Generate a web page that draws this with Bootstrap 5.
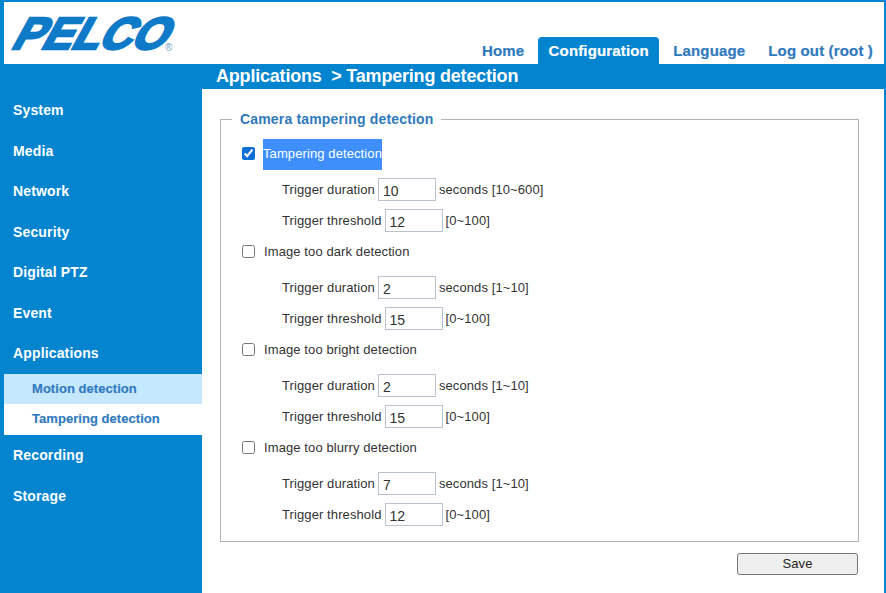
<!DOCTYPE html>
<html lang="en"><head><meta charset="utf-8"><title>Pelco</title>
<link rel="stylesheet" href="https://cdn.jsdelivr.net/npm/bootstrap@5.3.0/dist/css/bootstrap.min.css">
<style>
html,body{height:100%;overflow:hidden}
body{background:#0284cf;font-family:"Liberation Sans",Arial,sans-serif;font-size:13px;color:#333;padding:2px 2px 0 4px}
.shell{height:591px;display:flex;flex-direction:column}
.topband{height:62px;background:#fff;display:flex;justify-content:space-between;align-items:flex-end}
.pelco{margin:13px 0 0 6px;align-self:flex-start;overflow:visible}
.tabs .nav-link{color:#2f79bd;font-weight:700;font-size:15px;letter-spacing:.15px;padding:0 11px 0 12px;height:27px;line-height:28px;border-radius:4px 4px 0 0;-webkit-text-stroke:.2px;white-space:nowrap}
.tabs .nav-link.current{background:#0284cf;color:#fff;width:121px;text-align:center;padding:0}
.tabs .tab-home{padding-right:14px}
.tabs .tab-lang{padding-left:14px;padding-right:11px}
.belly{flex:1;display:flex;min-height:0}
.sidebar{width:198px;flex:none;padding-top:25px}
.sideitem{display:block;height:40.5px;line-height:42px;color:#fff;font-weight:700;font-size:14px;letter-spacing:.15px;padding-left:9px;text-decoration:none}
.sideitem.opened{height:42px}
.sideitem.aftersub{margin-top:-1px}
.subitem{display:block;height:31px;line-height:29px;color:#2f79bd;font-weight:700;font-size:13px;letter-spacing:.05px;padding-left:28px;background:#fff;text-decoration:none;-webkit-text-stroke:.15px}
.subitem.hovered{background:#c5e8ff;height:30px}
.mainpane{flex:1;display:flex;flex-direction:column;min-width:0}
.crumb{height:25px;line-height:24px;color:#fff;font-weight:700;font-size:18px;padding-left:14px;white-space:pre;letter-spacing:-.2px}
.pagebody{flex:1;background:#fff;padding:20px 25px 0 18px}
.framebox{border:1px solid #b4b4b4;height:433px;margin:0;padding:0 0 0 21px;min-width:0}
.framebox legend{float:none;width:auto;font-size:14px;font-weight:700;color:#2f79bd;margin:0 0 10px -10px;padding:0 8px;line-height:20px;letter-spacing:.17px;display:block}
.detect{display:flex;align-items:center;height:31px}
.detect input{width:13px;height:13px;margin:0 8px 2px 0;accent-color:#0f6fd8;flex:none}
.detect label{letter-spacing:.1px;line-height:29px;height:31px;color:#333;white-space:nowrap;padding-left:1px}
.detect input:checked+label{background:#3e8ffb;color:#fff;width:119px;line-height:29px;padding-left:0}
.trigline{display:flex;align-items:center;height:31px;padding-left:40px;letter-spacing:.1px;white-space:nowrap}
.trigline.first{margin-top:4px}
.trigline.closing{margin-bottom:1px}
.trigline input{width:58px;height:23px;border:1px solid #b9c2cd;padding:2px 4px 0;margin:0 3px 0 3px;font:14px "Liberation Sans",Arial,sans-serif;color:#333;border-radius:0;outline:0}
.savebar{display:flex;justify-content:flex-end;padding:11px 1px 0 0}
.savebtn{width:121px;height:22px;background:#efefef;border:1px solid #767676;border-radius:3px;font-size:13px;line-height:18px;padding:0;color:#222;letter-spacing:.15px}
.savebtn:hover{background:#efefef;border-color:#767676;color:#222}
</style></head>
<body>
<div class="shell">
  <header class="topband">
    <svg class="pelco" width="172" height="38" viewBox="0 0 172 38" role="img" aria-label="PELCO logo">
      <text x="0" y="34.3" transform="matrix(1 0 -0.55 1 18.5 0)" font-family="Liberation Sans" font-weight="700" font-size="45" fill="#0f7ac8" stroke="#0f7ac8" stroke-width="2.6" textLength="154" lengthAdjust="spacingAndGlyphs">PELCO</text>
      <text x="155" y="36" font-family="Liberation Sans" font-size="10" fill="#6a9fc6">®</text>
    </svg>
    <nav class="nav tabs">
      <a class="nav-link tab-home" href="#">Home</a>
      <a class="nav-link current" href="#">Configuration</a>
      <a class="nav-link tab-lang" href="#">Language</a>
      <a class="nav-link" href="#">Log out (root )</a>
    </nav>
  </header>
  <div class="belly">
    <aside class="sidebar">
      <a class="sideitem" href="#">System</a>
      <a class="sideitem" href="#">Media</a>
      <a class="sideitem" href="#">Network</a>
      <a class="sideitem" href="#">Security</a>
      <a class="sideitem" href="#">Digital PTZ</a>
      <a class="sideitem" href="#">Event</a>
      <a class="sideitem opened" href="#">Applications</a>
      <a class="subitem hovered" href="#">Motion detection</a>
      <a class="subitem" href="#">Tampering detection</a>
      <a class="sideitem aftersub" href="#">Recording</a>
      <a class="sideitem" href="#">Storage</a>
    </aside>
    <main class="mainpane">
      <div class="crumb">Applications  &gt; Tampering detection</div>
      <div class="pagebody">
        <fieldset class="framebox">
          <legend>Camera tampering detection</legend>
          <div class="detect"><input type="checkbox" id="c1" checked><label for="c1">Tampering detection</label></div>
          <div class="trigline first">Trigger duration<input type="text" value="10">seconds [10~600]</div>
          <div class="trigline closing">Trigger threshold<input type="text" value="12">[0~100]</div>
          <div class="detect"><input type="checkbox" id="c2"><label for="c2">Image too dark detection</label></div>
          <div class="trigline first">Trigger duration<input type="text" value="2">seconds [1~10]</div>
          <div class="trigline closing">Trigger threshold<input type="text" value="15">[0~100]</div>
          <div class="detect"><input type="checkbox" id="c3"><label for="c3">Image too bright detection</label></div>
          <div class="trigline first">Trigger duration<input type="text" value="2">seconds [1~10]</div>
          <div class="trigline closing">Trigger threshold<input type="text" value="15">[0~100]</div>
          <div class="detect"><input type="checkbox" id="c4"><label for="c4">Image too blurry detection</label></div>
          <div class="trigline first">Trigger duration<input type="text" value="7">seconds [1~10]</div>
          <div class="trigline closing">Trigger threshold<input type="text" value="12">[0~100]</div>
        </fieldset>
        <div class="savebar"><button type="button" class="btn savebtn">Save</button></div>
      </div>
    </main>
  </div>
</div>
<script src="https://cdn.jsdelivr.net/npm/bootstrap@5.3.0/dist/js/bootstrap.bundle.min.js"></script>
</body></html>
